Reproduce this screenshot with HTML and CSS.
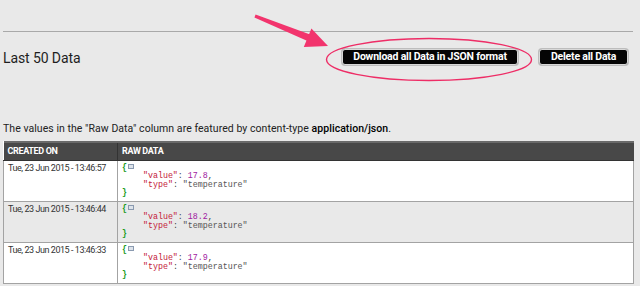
FILE: index.html
```html
<!DOCTYPE html>
<html>
<head>
<meta charset="utf-8">
<link rel="stylesheet" href="styles.css">
</head>
<body>
<div class="page">
  <div class="rule"></div>
  <div class="titlebar">
    <h2 class="title">Last 50 Data</h2>
    <div class="actions">
      <button class="btn btn-download">Download all Data in JSON format</button>
      <button class="btn btn-delete">Delete all Data</button>
    </div>
  </div>
  <p class="note">The values in the "Raw Data" column are featured by content-type <b>application/json</b>.</p>
  <table class="data">
    <colgroup><col class="col-date"><col></colgroup>
    <thead>
      <tr><th>CREATED ON</th><th>RAW DATA</th></tr>
    </thead>
    <tbody>
      <tr>
        <td class="c-date">Tue, 23 Jun 2015 - 13:46:57</td>
        <td><div class="json"><div><span class="brace">{</span><span class="toggle"></span></div><div class="ind"><span class="key">"value"</span>: <span class="num">17.8</span>,</div><div class="ind"><span class="key">"type"</span>: <span class="str">"temperature"</span></div><div><span class="brace">}</span></div></div></td>
      </tr>
      <tr class="alt">
        <td class="c-date">Tue, 23 Jun 2015 - 13:46:44</td>
        <td><div class="json"><div><span class="brace">{</span><span class="toggle"></span></div><div class="ind"><span class="key">"value"</span>: <span class="num">18.2</span>,</div><div class="ind"><span class="key">"type"</span>: <span class="str">"temperature"</span></div><div><span class="brace">}</span></div></div></td>
      </tr>
      <tr>
        <td class="c-date">Tue, 23 Jun 2015 - 13:46:33</td>
        <td><div class="json"><div><span class="brace">{</span><span class="toggle"></span></div><div class="ind"><span class="key">"value"</span>: <span class="num">17.9</span>,</div><div class="ind"><span class="key">"type"</span>: <span class="str">"temperature"</span></div><div><span class="brace">}</span></div></div></td>
      </tr>
    </tbody>
  </table>
  <svg class="annotation" width="640" height="100" viewBox="0 0 640 100">
    <polygon points="254.4,17.4 255.6,14.6 310.1,34.4 307.5,41.1" fill="#f2346d"/>
    <polygon points="328,46 311.4,28.4 303.8,46.9" fill="#f2346d"/>
    <ellipse cx="429" cy="59.5" rx="102.5" ry="21" fill="none" stroke="#ee2d66" stroke-width="1.4"/>
  </svg>
</div>
</body>
</html>
```

FILE: styles.css
```css
* { box-sizing: border-box; }
html, body { margin: 0; padding: 0; }
body {
  background: #e9e9e9;
  font-family: Roboto, "Noto Sans", sans-serif;
  color: #222;
  width: 640px;
  height: 286px;
  overflow: hidden;
}
.page {
  position: relative;
  padding: 31px 6px 0 3px;
}
.rule {
  height: 1px;
  background: #a9a9a9;
  margin-right: 1px;
}
.titlebar {
  display: flex;
  align-items: center;
  justify-content: space-between;
  height: 50px;
  padding-right: 6px;
}
.title {
  margin: 0;
  font-size: 14px;
  font-weight: 400;
  color: #1e1e1e;
  letter-spacing: -0.1px;
  padding-top: 2px;
}
.actions {
  display: flex;
  gap: 21px;
}
.btn {
  height: 16px;
  padding: 0;
  background: #050505;
  color: #fff;
  border: 1px solid #d8d8d8;
  border-radius: 3px;
  font-family: Roboto, sans-serif;
  font-size: 10.5px;
  font-weight: 700;
  letter-spacing: -0.2px;
  line-height: 14px;
  box-shadow: 0 0 0 1px #bdbdbd;
}
.btn-download { width: 176px; }
.btn-delete { width: 89px; }
.note {
  margin: 0;
  font-size: 10.5px;
  line-height: 14px;
  color: #222;
  padding-top: 40px;
  letter-spacing: 0.05px;
}
.note b { font-weight: 500; color: #000; }
.data {
  margin-top: 5px;
  width: 631px;
  table-layout: fixed;
  border-collapse: collapse;
  font-size: 9.5px;
  background: #fff;
}
.col-date { width: 114px; }
.data th {
  background: #484848;
  color: #fff;
  text-align: left;
  font-weight: 700;
  font-size: 9px;
  letter-spacing: -0.35px;
  height: 18px;
  padding: 0 4px;
  border-top: 2px solid #6a6a6a;
  border-bottom: 1px solid #333;
}
.data th + th { border-left: 1px solid #333; }
.data td {
  vertical-align: top;
  border: 1px solid #a3a3a3;
  padding: 3px 4px 3px 4px;
  height: 40px;
  color: #333;
}
.data td.c-date {
  white-space: nowrap;
  overflow: hidden;
  letter-spacing: -0.45px;
  font-size: 9px;
  padding-top: 2px;
}
.data tr.alt td { background: #e9e9e9; }
.json {
  font-family: "Liberation Mono", "DejaVu Sans Mono", monospace;
  font-size: 8.3px;
  line-height: 8.5px;
  color: #444;
}
.json > div { height: 8.5px; }
.json .ind { padding-left: 21px; }
.brace { color: #1a9a1a; font-weight: 700; }
.toggle {
  display: inline-block;
  width: 6px;
  height: 5px;
  border: 1px solid #8a9ab0;
  background: #dde3ea;
  margin-left: 1px;
  vertical-align: 1px;
}
.key { color: #c41a3a; }
.num { color: #a020a0; }
.str { color: #555; }
.annotation {
  position: absolute;
  left: 0;
  top: 0;
  pointer-events: none;
}
```
